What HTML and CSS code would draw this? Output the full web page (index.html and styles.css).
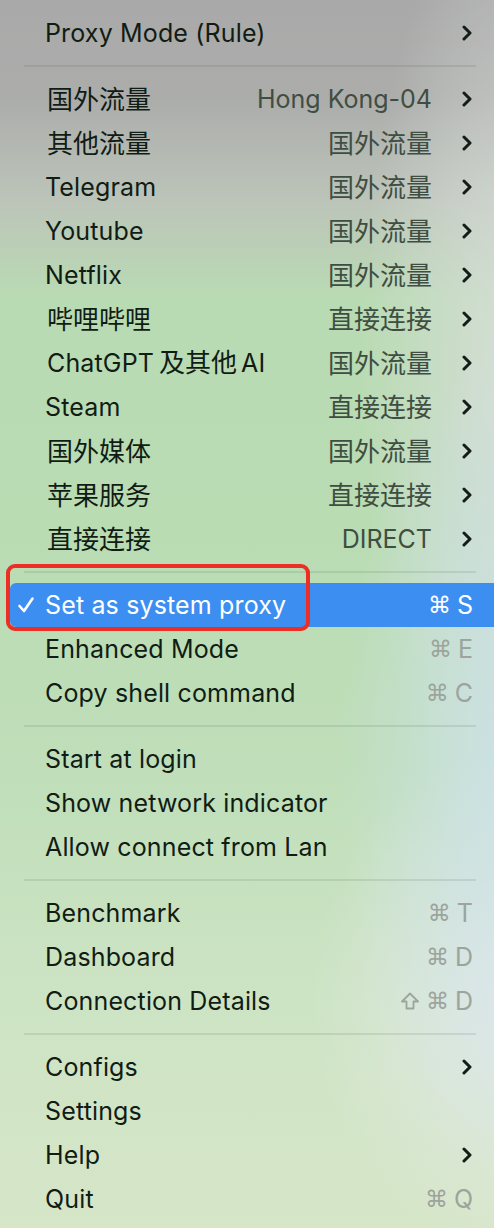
FILE: index.html
```html
<!DOCTYPE html>
<html>
<head>
<meta charset="utf-8">
<link rel="stylesheet" href="styles.css">
</head>
<body>
<div class="menu">
  <div class="item"><span class="label">Proxy Mode (Rule)</span><span class="chev"><svg viewBox="0 0 10 16" width="10" height="16"><path d="M2 2 L8 8 L2 14" /></svg></span></div>
  <div class="sep"></div>

  <div class="item"><span class="label cjk">国外流量</span><span class="value">Hong Kong-04</span><span class="chev"><svg viewBox="0 0 10 16" width="10" height="16"><path d="M2 2 L8 8 L2 14" /></svg></span></div>
  <div class="item"><span class="label cjk">其他流量</span><span class="value cjk">国外流量</span><span class="chev"><svg viewBox="0 0 10 16" width="10" height="16"><path d="M2 2 L8 8 L2 14" /></svg></span></div>
  <div class="item"><span class="label">Telegram</span><span class="value cjk">国外流量</span><span class="chev"><svg viewBox="0 0 10 16" width="10" height="16"><path d="M2 2 L8 8 L2 14" /></svg></span></div>
  <div class="item"><span class="label">Youtube</span><span class="value cjk">国外流量</span><span class="chev"><svg viewBox="0 0 10 16" width="10" height="16"><path d="M2 2 L8 8 L2 14" /></svg></span></div>
  <div class="item"><span class="label">Netflix</span><span class="value cjk">国外流量</span><span class="chev"><svg viewBox="0 0 10 16" width="10" height="16"><path d="M2 2 L8 8 L2 14" /></svg></span></div>
  <div class="item"><span class="label cjk">哔哩哔哩</span><span class="value cjk">直接连接</span><span class="chev"><svg viewBox="0 0 10 16" width="10" height="16"><path d="M2 2 L8 8 L2 14" /></svg></span></div>
  <div class="item"><span class="label mixed">ChatGPT<span class="cjk gap">及其他</span>AI</span><span class="value cjk">国外流量</span><span class="chev"><svg viewBox="0 0 10 16" width="10" height="16"><path d="M2 2 L8 8 L2 14" /></svg></span></div>
  <div class="item"><span class="label">Steam</span><span class="value cjk">直接连接</span><span class="chev"><svg viewBox="0 0 10 16" width="10" height="16"><path d="M2 2 L8 8 L2 14" /></svg></span></div>
  <div class="item"><span class="label cjk">国外媒体</span><span class="value cjk">国外流量</span><span class="chev"><svg viewBox="0 0 10 16" width="10" height="16"><path d="M2 2 L8 8 L2 14" /></svg></span></div>
  <div class="item"><span class="label cjk">苹果服务</span><span class="value cjk">直接连接</span><span class="chev"><svg viewBox="0 0 10 16" width="10" height="16"><path d="M2 2 L8 8 L2 14" /></svg></span></div>
  <div class="item"><span class="label cjk">直接连接</span><span class="value">DIRECT</span><span class="chev"><svg viewBox="0 0 10 16" width="10" height="16"><path d="M2 2 L8 8 L2 14" /></svg></span></div>
  <div class="sep"></div>

  <div class="item active"><span class="check"><svg viewBox="0 0 18 18" width="18" height="18"><path d="M2.5 10 L7 15 L15.5 2.5" /></svg></span><span class="label">Set as system proxy</span><span class="key"><span class="sym">⌘</span>S</span>
    <div class="callout"></div>
  </div>
  <div class="item"><span class="label">Enhanced Mode</span><span class="key"><span class="sym">⌘</span>E</span></div>
  <div class="item"><span class="label">Copy shell command</span><span class="key"><span class="sym">⌘</span>C</span></div>
  <div class="sep"></div>

  <div class="item"><span class="label">Start at login</span></div>
  <div class="item"><span class="label">Show network indicator</span></div>
  <div class="item"><span class="label">Allow connect from Lan</span></div>
  <div class="sep"></div>

  <div class="item"><span class="label">Benchmark</span><span class="key"><span class="sym">⌘</span>T</span></div>
  <div class="item"><span class="label">Dashboard</span><span class="key"><span class="sym">⌘</span>D</span></div>
  <div class="item"><span class="label">Connection Details</span><span class="key"><svg class="shift" viewBox="0 0 20 20" width="20" height="20"><path d="M10 2.5 L18 10.5 L13.5 10.5 L13.5 17.5 L6.5 17.5 L6.5 10.5 L2 10.5 Z" /></svg><span class="sym">⌘</span>D</span></div>
  <div class="sep"></div>

  <div class="item"><span class="label">Configs</span><span class="chev"><svg viewBox="0 0 10 16" width="10" height="16"><path d="M2 2 L8 8 L2 14" /></svg></span></div>
  <div class="item"><span class="label">Settings</span></div>
  <div class="item"><span class="label">Help</span><span class="chev"><svg viewBox="0 0 10 16" width="10" height="16"><path d="M2 2 L8 8 L2 14" /></svg></span></div>
  <div class="item"><span class="label">Quit</span><span class="key"><span class="sym">⌘</span>Q</span></div>
</div>
</body>
</html>
```

FILE: styles.css
```css
html, body {
  margin: 0;
  padding: 0;
}
body {
  width: 494px;
  height: 1228px;
  overflow: hidden;
  font-family: Inter, "Noto Sans CJK SC", sans-serif;
  background:
    radial-gradient(ellipse 180px 420px at 520px 760px, rgba(205,226,238,0.85), rgba(205,226,238,0) 100%),
    radial-gradient(ellipse 220px 260px at 530px 1000px, rgba(232,234,238,0.9), rgba(232,234,238,0) 100%),
    radial-gradient(ellipse 160px 500px at 520px 380px, rgba(218,222,220,0.9), rgba(218,222,220,0) 100%),
    linear-gradient(180deg, #a9a9a9 0px, #acadab 100px, #bcc4b9 200px, #b9dbb3 300px, #b9dcb3 520px, #bfdeb9 760px, #cde4c4 1000px, #d6e6c8 1228px);
}
.menu {
  display: flex;
  flex-direction: column;
  padding: 11px 0 7px 0;
}
.item {
  position: relative;
  height: 44px;
  display: flex;
  align-items: center;
  padding: 0 21px 0 45px;
  color: #111c14;
  font-size: 25px;
}
.label {
  flex: 1;
  white-space: nowrap;
  letter-spacing: 0.15px;
}
.cjk {
  font-family: "Noto Sans CJK SC", sans-serif;
  font-size: 26px;
  letter-spacing: 0;
  line-height: 1;
  margin-bottom: 3px;
}
.label.cjk {
  padding-left: 2px;
}
.label.mixed {
  padding-left: 2px;
}
.cjk.gap {
  margin: 0 4px 0 5px;
}
.value {
  color: #3f4e42;
  white-space: nowrap;
  margin-right: 30px;
}
.chev {
  width: 10px;
  height: 16px;
  display: flex;
  margin-right: 1px;
}
.chev svg path {
  fill: none;
  stroke: #141c17;
  stroke-width: 3;
  stroke-linecap: round;
  stroke-linejoin: round;
}
.key {
  color: #9ca49c;
  display: flex;
  align-items: center;
  gap: 6px;
  white-space: nowrap;
}
.sym {
  font-family: "DejaVu Sans", sans-serif;
  font-size: 23px;
}
.shift path {
  fill: none;
  stroke: #9ca49c;
  stroke-width: 1.8;
  stroke-linejoin: round;
}
.sep {
  height: 22px;
  display: flex;
  align-items: center;
  padding: 0 18px 0 24px;
}
.sep::before {
  content: "";
  flex: 1;
  height: 2px;
  background: rgba(60, 80, 60, 0.12);
}
.item.active {
  margin-left: 10px;
  padding-left: 35px;
  background: #3d8ef1;
  color: #ffffff;
  border-radius: 6px 0 0 6px;
}
.item.active .key {
  color: #ffffff;
}
.check {
  position: absolute;
  left: 7px;
  top: 50%;
  transform: translateY(-50%);
  width: 18px;
  height: 18px;
  display: flex;
}
.check path {
  fill: none;
  stroke: #ffffff;
  stroke-width: 2.6;
  stroke-linecap: round;
  stroke-linejoin: round;
}
.callout {
  position: absolute;
  left: -4px;
  top: -19px;
  width: 296px;
  height: 59px;
  border: 4px solid #ec2e24;
  border-radius: 9px;
  pointer-events: none;
}
```
